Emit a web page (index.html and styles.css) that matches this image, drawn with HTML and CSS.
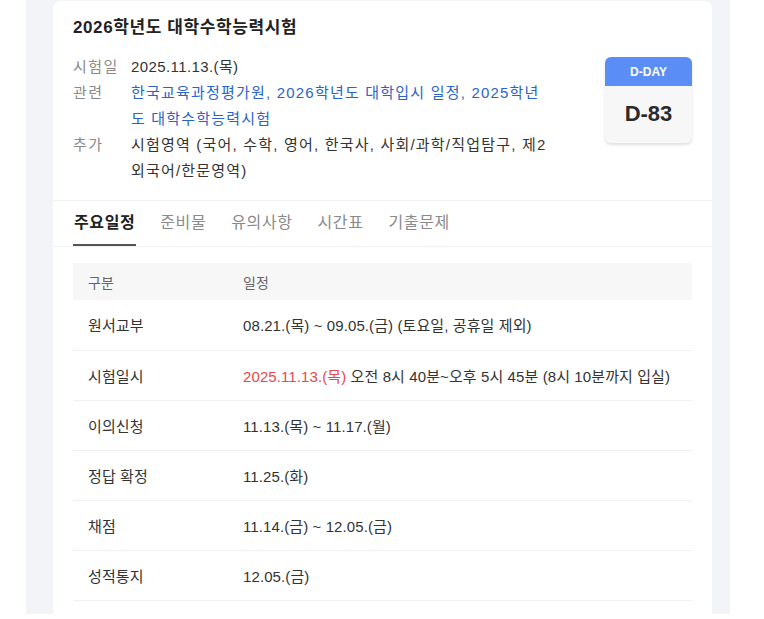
FILE: index.html
```html
<!DOCTYPE html>
<html lang="ko">
<head>
<meta charset="utf-8">
<link rel="stylesheet" href="styles.css">
</head>
<body>
<div class="panel">
  <div class="card">
    <div class="head">
      <h1 class="title">2026학년도 대학수학능력시험</h1>
      <div class="summary">
        <dl class="info">
          <div class="info-row"><dt>시험일</dt><dd><time class="date">2025.11.13.(목)</time></dd></div>
          <div class="info-row"><dt>관련</dt><dd class="links">한국교육과정평가원, 2026학년도 대학입시 일정, 2025학년도 대학수학능력시험</dd></div>
          <div class="info-row"><dt>추가</dt><dd>시험영역 (국어, 수학, 영어, 한국사, 사회/과학/직업탐구, 제2외국어/한문영역)</dd></div>
        </dl>
        <div class="dday">
          <div class="dday-top">D-DAY</div>
          <div class="dday-num">D-83</div>
        </div>
      </div>
    </div>
    <nav class="tabs">
      <span class="tab active">주요일정</span>
      <span class="tab">준비물</span>
      <span class="tab">유의사항</span>
      <span class="tab">시간표</span>
      <span class="tab">기출문제</span>
    </nav>
    <div class="table-wrap">
      <table class="sched">
        <thead>
          <tr><th class="c1">구분</th><th>일정</th></tr>
        </thead>
        <tbody>
          <tr><td class="c1">원서교부</td><td>08.21.(목) ~ 09.05.(금) (토요일, 공휴일 제외)</td></tr>
          <tr><td class="c1">시험일시</td><td><span class="red">2025.11.13.(목)</span> 오전 8시 40분~오후 5시 45분 (8시 10분까지 입실)</td></tr>
          <tr><td class="c1">이의신청</td><td>11.13.(목) ~ 11.17.(월)</td></tr>
          <tr><td class="c1">정답 확정</td><td>11.25.(화)</td></tr>
          <tr><td class="c1">채점</td><td>11.14.(금) ~ 12.05.(금)</td></tr>
          <tr><td class="c1">성적통지</td><td>12.05.(금)</td></tr>
        </tbody>
      </table>
    </div>
  </div>
</div>
</body>
</html>
```

FILE: styles.css
```css
* { box-sizing: border-box; }
html, body { margin: 0; padding: 0; background: #fff; }
body {
  font-family: "Liberation Sans", "Noto Sans CJK KR", sans-serif;
  color: #333;
  height: 619px;
  overflow: hidden;
}
.panel {
  margin-left: 26px;
  width: 704px;
  height: 614px;
  background: #f3f4f7;
  padding: 1px 18px 0 27px;
  overflow: hidden;
}
.card {
  background: #fff;
  width: 659px;
  height: 640px;
  border-radius: 8px 8px 0 0;
}
.head {
  padding: 16px 20px 0 20px;
  height: 200px;
  border-bottom: 1px solid #f0f0f2;
}
.title {
  margin: 0;
  font-size: 17px;
  letter-spacing: 0.6px;
  line-height: 22px;
  font-weight: bold;
  color: #222;
}
.summary {
  display: flex;
  justify-content: space-between;
  align-items: flex-start;
  margin-top: 15px;
}
.info { margin: 0; width: 480px; }
.info-row {
  display: flex;
  font-size: 15px;
  letter-spacing: 1.2px;
  line-height: 26px;
}
.info-row dt {
  width: 58px;
  flex: none;
  color: #8a8a8a;
  letter-spacing: 1.5px;
}
.info-row dd {
  margin: 0;
  width: 417px;
  color: #333;
}
.info-row .date { letter-spacing: 0.4px; }
.info-row dd.links { color: #2b63c9; }
.dday {
  width: 87px;
  margin-top: 3px;
  border-radius: 6px;
  overflow: hidden;
  background: #f7f7f8;
  box-shadow: 0 2px 3px rgba(0,0,0,0.12);
}
.dday-top {
  background: #5a8ef6;
  color: #fff;
  font-size: 12px;
  font-weight: bold;
  text-align: center;
  height: 29px;
  line-height: 30px;
}
.dday-num {
  height: 57px;
  line-height: 56px;
  text-align: center;
  font-size: 22px;
  font-weight: bold;
  color: #2a2a2a;
}
.tabs {
  display: flex;
  gap: 23px;
  padding: 0 20px;
  height: 46px;
  border-bottom: 1px solid #f0f0f2;
  font-size: 16px;
  letter-spacing: 0.6px;
}
.tab {
  line-height: 44px;
  color: #8a8a8a;
  padding: 0 1px;
}
.tab.active {
  color: #222;
  font-weight: bold;
  border-bottom: 2px solid #555;
}
.table-wrap { padding: 16px 20px 0 20px; }
.sched {
  width: 100%;
  border-collapse: collapse;
  font-size: 15px;
  letter-spacing: 0.1px;
}
.sched th {
  background: #f7f7f7;
  color: #666;
  font-weight: normal;
  font-size: 14px;
  text-align: left;
  height: 37px;
  padding: 0;
}
.sched td {
  height: 50px;
  padding: 0;
  border-bottom: 1px solid #f0f0f2;
  color: #333;
}
.sched .c1 { width: 170px; padding-left: 15px; }
.red { color: #e5484d; }
```
